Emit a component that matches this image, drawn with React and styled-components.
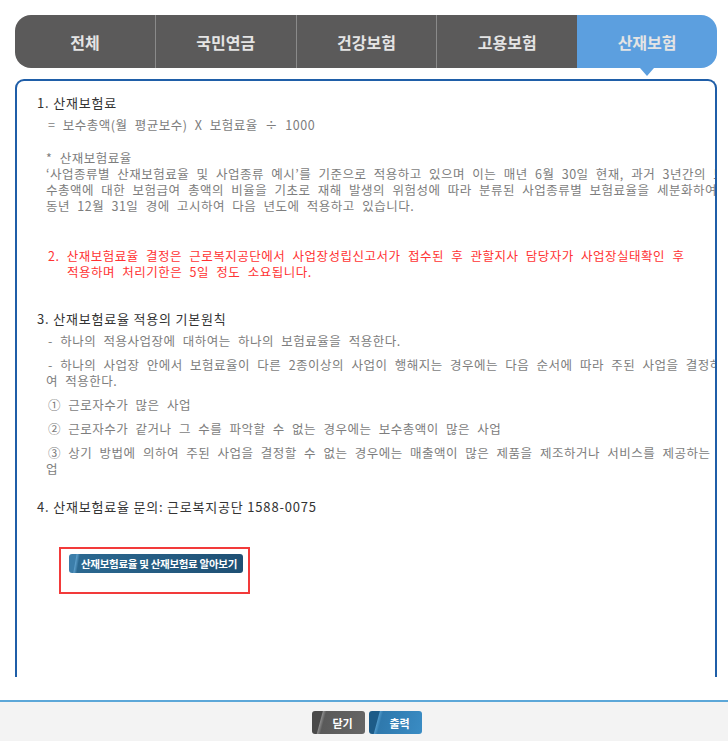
import React, { useState } from 'react';
import styled, { createGlobalStyle } from 'styled-components';

const GlobalStyle = createGlobalStyle`
  html, body {
    margin: 0;
    padding: 0;
    background: #fff;
    font-family: "Noto Sans CJK KR", "Noto Sans", sans-serif;
  }
`;

const tabs = ['전체', '국민연금', '건강보험', '고용보험', '산재보험'];

const App = () => {
  const [active, setActive] = useState(4);

  return (
    <Page>
      <GlobalStyle />
      <Main>
        <TabBar>
          {tabs.map((t, i) => (
            <Tab key={t} $active={i === active} $first={i === 0} $last={i === tabs.length - 1} onClick={() => setActive(i)}>
              {t}
            </Tab>
          ))}
        </TabBar>
        <Panel>
          <Inner>
            <Heading>1. 산재보험료</Heading>
            <Line $indent={11} $top={6}>= 보수총액(월 평균보수) X 보험료율 ÷ 1000</Line>

            <Para $top={17}>
              * 산재보험료율<br />
              ‘사업종류별 산재보험료율 및 사업종류 예시’를 기준으로 적용하고 있으며 이는 매년 6월 30일 현재, 과거 3년간의 보<br />
              수총액에 대한 보험급여 총액의 비율을 기초로 재해 발생의 위험성에 따라 분류된 사업종류별 보험료율을 세분화하여<br />
              동년 12월 31일 경에 고시하여 다음 년도에 적용하고 있습니다.
            </Para>

            <RedPara>
              2. 산재보험료율 결정은 근로복지공단에서 사업장성립신고서가 접수된 후 관할지사 담당자가 사업장실태확인 후<br />
              <Cont>적용하며 처리기한은 5일 정도 소요됩니다.</Cont>
            </RedPara>

            <Heading $top={31}>3. 산재보험료율 적용의 기본원칙</Heading>
            <Line $indent={11} $top={6}>- 하나의 적용사업장에 대하여는 하나의 보험료율을 적용한다.</Line>
            <Line $indent={11} $top={8}>
              - 하나의 사업장 안에서 보험료율이 다른 2종이상의 사업이 행해지는 경우에는 다음 순서에 따라 주된 사업을 결정하<br />
              <Back>여 적용한다.</Back>
            </Line>
            <Line $indent={11} $top={8}>① 근로자수가 많은 사업</Line>
            <Line $indent={11} $top={8}>② 근로자수가 같거나 그 수를 파악할 수 없는 경우에는 보수총액이 많은 사업</Line>
            <Line $indent={11} $top={8}>
              ③ 상기 방법에 의하여 주된 사업을 결정할 수 없는 경우에는 매출액이 많은 제품을 제조하거나 서비스를 제공하는 사<br />
              <Back>업</Back>
            </Line>

            <Heading $top={22}>4. 산재보험료율 문의: 근로복지공단 1588-0075</Heading>

            <Highlight>
              <InfoButton>산재보험료율 및 산재보험료 알아보기</InfoButton>
            </Highlight>
          </Inner>
        </Panel>
      </Main>
      <Footer>
        <FootButton $tone="gray">닫기</FootButton>
        <FootButton $tone="blue">출력</FootButton>
      </Footer>
    </Page>
  );
};

export default App;

const Page = styled.div`
  width: 728px;
  height: 741px;
  display: flex;
  flex-direction: column;
  overflow: hidden;
`;

const Main = styled.div`
  padding: 15px 11px 0 15px;
  height: 662px;
  display: flex;
  flex-direction: column;
`;

const TabBar = styled.div`
  display: flex;
  height: 53px;
  flex-shrink: 0;
`;

const Tab = styled.div`
  position: relative;
  flex: 1;
  display: flex;
  align-items: center;
  justify-content: center;
  font-size: 16px;
  font-weight: bold;
  color: #e4e4e4;
  cursor: pointer;
  background: ${p => (p.$active ? '#5c9fdf' : '#5b5a5a')};
  border-left: ${p => (p.$first || p.$active ? 'none' : '1px solid #8a8a8a')};
  border-radius: ${p => (p.$first ? '16px 0 0 16px' : p.$last ? '0 16px 16px 0' : '0')};

  ${p => p.$active && `
    &::after {
      content: '';
      position: absolute;
      left: 50%;
      bottom: -8px;
      margin-left: -7px;
      border-left: 7px solid transparent;
      border-right: 7px solid transparent;
      border-top: 8px solid #5c9fdf;
    }
  `}
`;

const Panel = styled.div`
  margin-top: 11px;
  flex: 1;
  border: 2px solid #1f5ea8;
  border-bottom: none;
  border-radius: 9px 9px 0 0;
  overflow: hidden;
`;

const Inner = styled.div`
  width: 800px;
  padding: 14px 0 0 20px;
  font-size: 12.5px;
  line-height: 16px;
  letter-spacing: 0.5px;
  word-spacing: 4px;
  white-space: nowrap;
`;

const Heading = styled.div`
  margin-top: ${p => p.$top || 0}px;
  font-size: 13px;
  letter-spacing: 0.8px;
  word-spacing: 0;
  color: #333;
`;

const Line = styled.div`
  margin-top: ${p => p.$top || 0}px;
  padding-left: ${p => p.$indent || 0}px;
  color: #7d7d7d;
`;

const Back = styled.span`
  margin-left: -2px;
`;

const Para = styled.div`
  margin-top: ${p => p.$top || 0}px;
  padding-left: 9px;
  color: #7d7d7d;
`;

const RedPara = styled.div`
  margin-top: 34px;
  padding-left: 11px;
  color: #ff3333;
`;

const Cont = styled.span`
  padding-left: 19px;
`;

const Highlight = styled.div`
  margin: 32px 0 0 22px;
  width: 191px;
  height: 47px;
  border: 2px solid #f23a3a;
  padding: 5px 0 0 8px;
  box-sizing: border-box;
`;

const InfoButton = styled.button`
  display: block;
  width: 174px;
  height: 19px;
  border: none;
  border-radius: 3px;
  padding: 0 0 0 6px;
  color: #fff;
  font-family: "Noto Sans CJK KR", sans-serif;
  font-size: 10.5px;
  line-height: 19px;
  font-weight: bold;
  letter-spacing: -0.3px;
  word-spacing: 0;
  background: linear-gradient(100deg, #3c7eaa 0, #3c7eaa 7px, #5a9cc8 8px, #2b6890 11px, #1e4f73 100%);
  cursor: pointer;
`;

const Footer = styled.div`
  margin-top: 23px;
  flex: 1;
  border-top: 2px solid #5ca7d8;
  background: #f3f3f3;
  display: flex;
  justify-content: center;
  gap: 4px;
  padding-top: 9px;
  padding-left: 6px;
`;

const FootButton = styled.button`
  width: 53px;
  height: 23px;
  border: none;
  border-radius: 3px;
  color: #fff;
  font-family: "Noto Sans CJK KR", sans-serif;
  font-size: 11px;
  font-weight: bold;
  padding: 0 0 0 8px;
  cursor: pointer;
  background: ${p => (p.$tone === 'blue'
    ? 'linear-gradient(105deg, #1d5b88 0, #1d5b88 10px, #4d96c8 11px, #2f79ad 14px, #3a8cc4 100%)'
    : 'linear-gradient(105deg, #4a4a4a 0, #4a4a4a 10px, #8a8a8a 11px, #5a5a5a 14px, #666 100%)')};
`;
